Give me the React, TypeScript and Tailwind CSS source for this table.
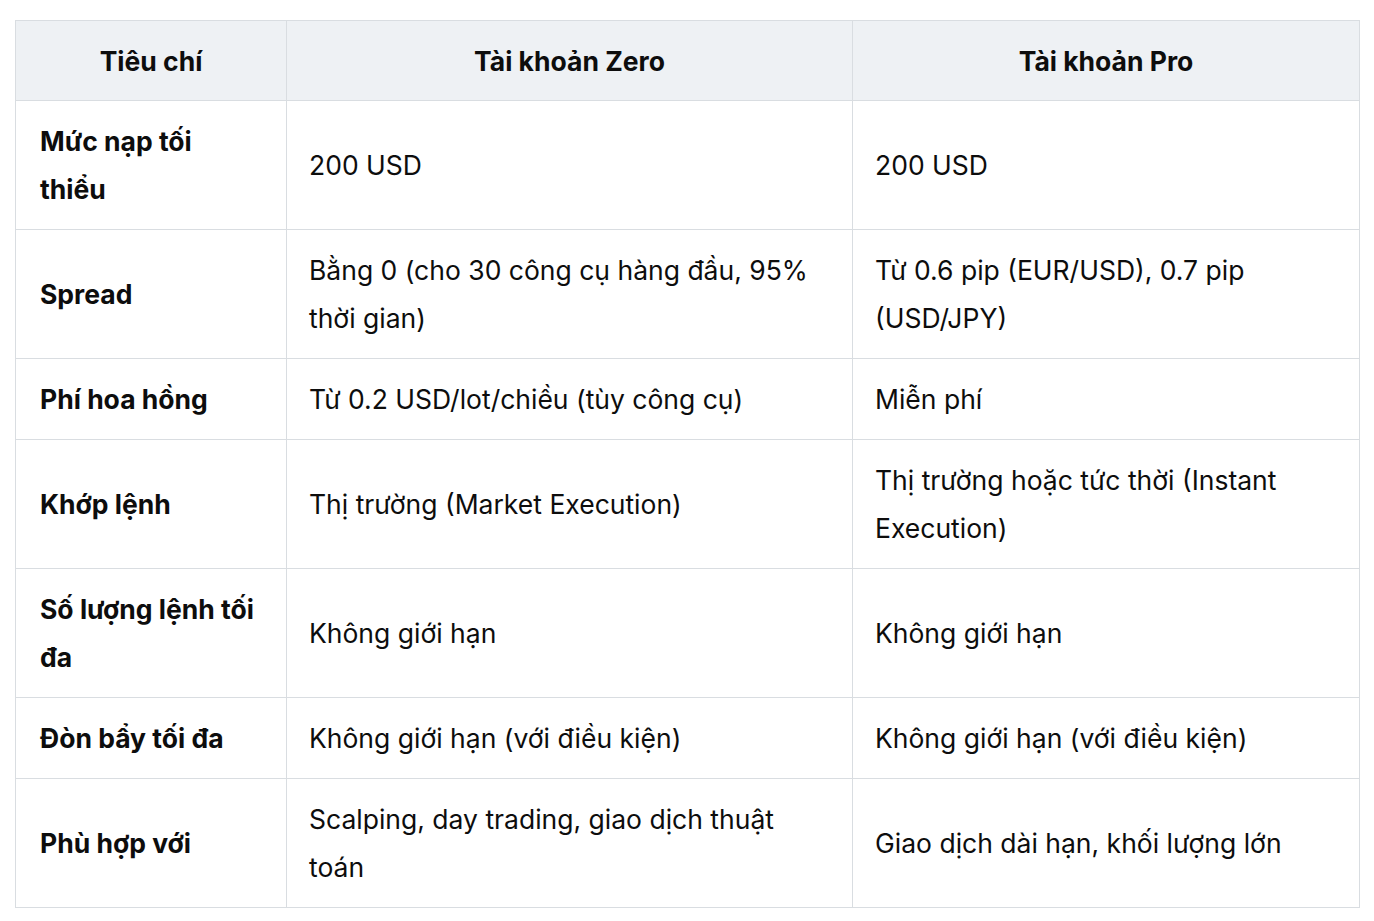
const rows: [string, string, string][] = [
  ["Mức nạp tối thiểu", "200 USD", "200 USD"],
  ["Spread", "Bằng 0 (cho 30 công cụ hàng đầu, 95% thời gian)", "Từ 0.6 pip (EUR/USD), 0.7 pip (USD/JPY)"],
  ["Phí hoa hồng", "Từ 0.2 USD/lot/chiều (tùy công cụ)", "Miễn phí"],
  ["Khớp lệnh", "Thị trường (Market Execution)", "Thị trường hoặc tức thời (Instant Execution)"],
  ["Số lượng lệnh tối đa", "Không giới hạn", "Không giới hạn"],
  ["Đòn bẩy tối đa", "Không giới hạn (với điều kiện)", "Không giới hạn (với điều kiện)"],
  ["Phù hợp với", "Scalping, day trading, giao dịch thuật toán", "Giao dịch dài hạn, khối lượng lớn"],
];

export default function App() {
  return (
    <main className="min-h-screen bg-white pt-[20px] pl-[15px] font-['Inter',sans-serif] text-[#0d0d0d]">
      <table className="w-[1345px] table-fixed border-collapse border border-[#d9dde1] text-[26.5px] leading-[48px]">
        <colgroup>
          <col className="w-[271px]" />
          <col className="w-[566px]" />
          <col className="w-[507px]" />
        </colgroup>
        <thead>
          <tr className="bg-[#eef1f4]">
            {["Tiêu chí", "Tài khoản Zero", "Tài khoản Pro"].map((h) => (
              <th
                key={h}
                className="h-[80px] border border-[#d9dde1] px-6 py-[15px] text-center font-bold"
              >
                {h}
              </th>
            ))}
          </tr>
        </thead>
        <tbody>
          {rows.map(([label, zero, pro]) => (
            <tr key={label}>
              <td className="border border-[#d9dde1] px-6 py-4 align-middle font-bold">{label}</td>
              <td className="border border-[#d9dde1] pl-[22px] pr-6 py-4 align-middle">{zero}</td>
              <td className="border border-[#d9dde1] pl-[22px] pr-6 py-4 align-middle">{pro}</td>
            </tr>
          ))}
        </tbody>
      </table>
    </main>
  );
}
